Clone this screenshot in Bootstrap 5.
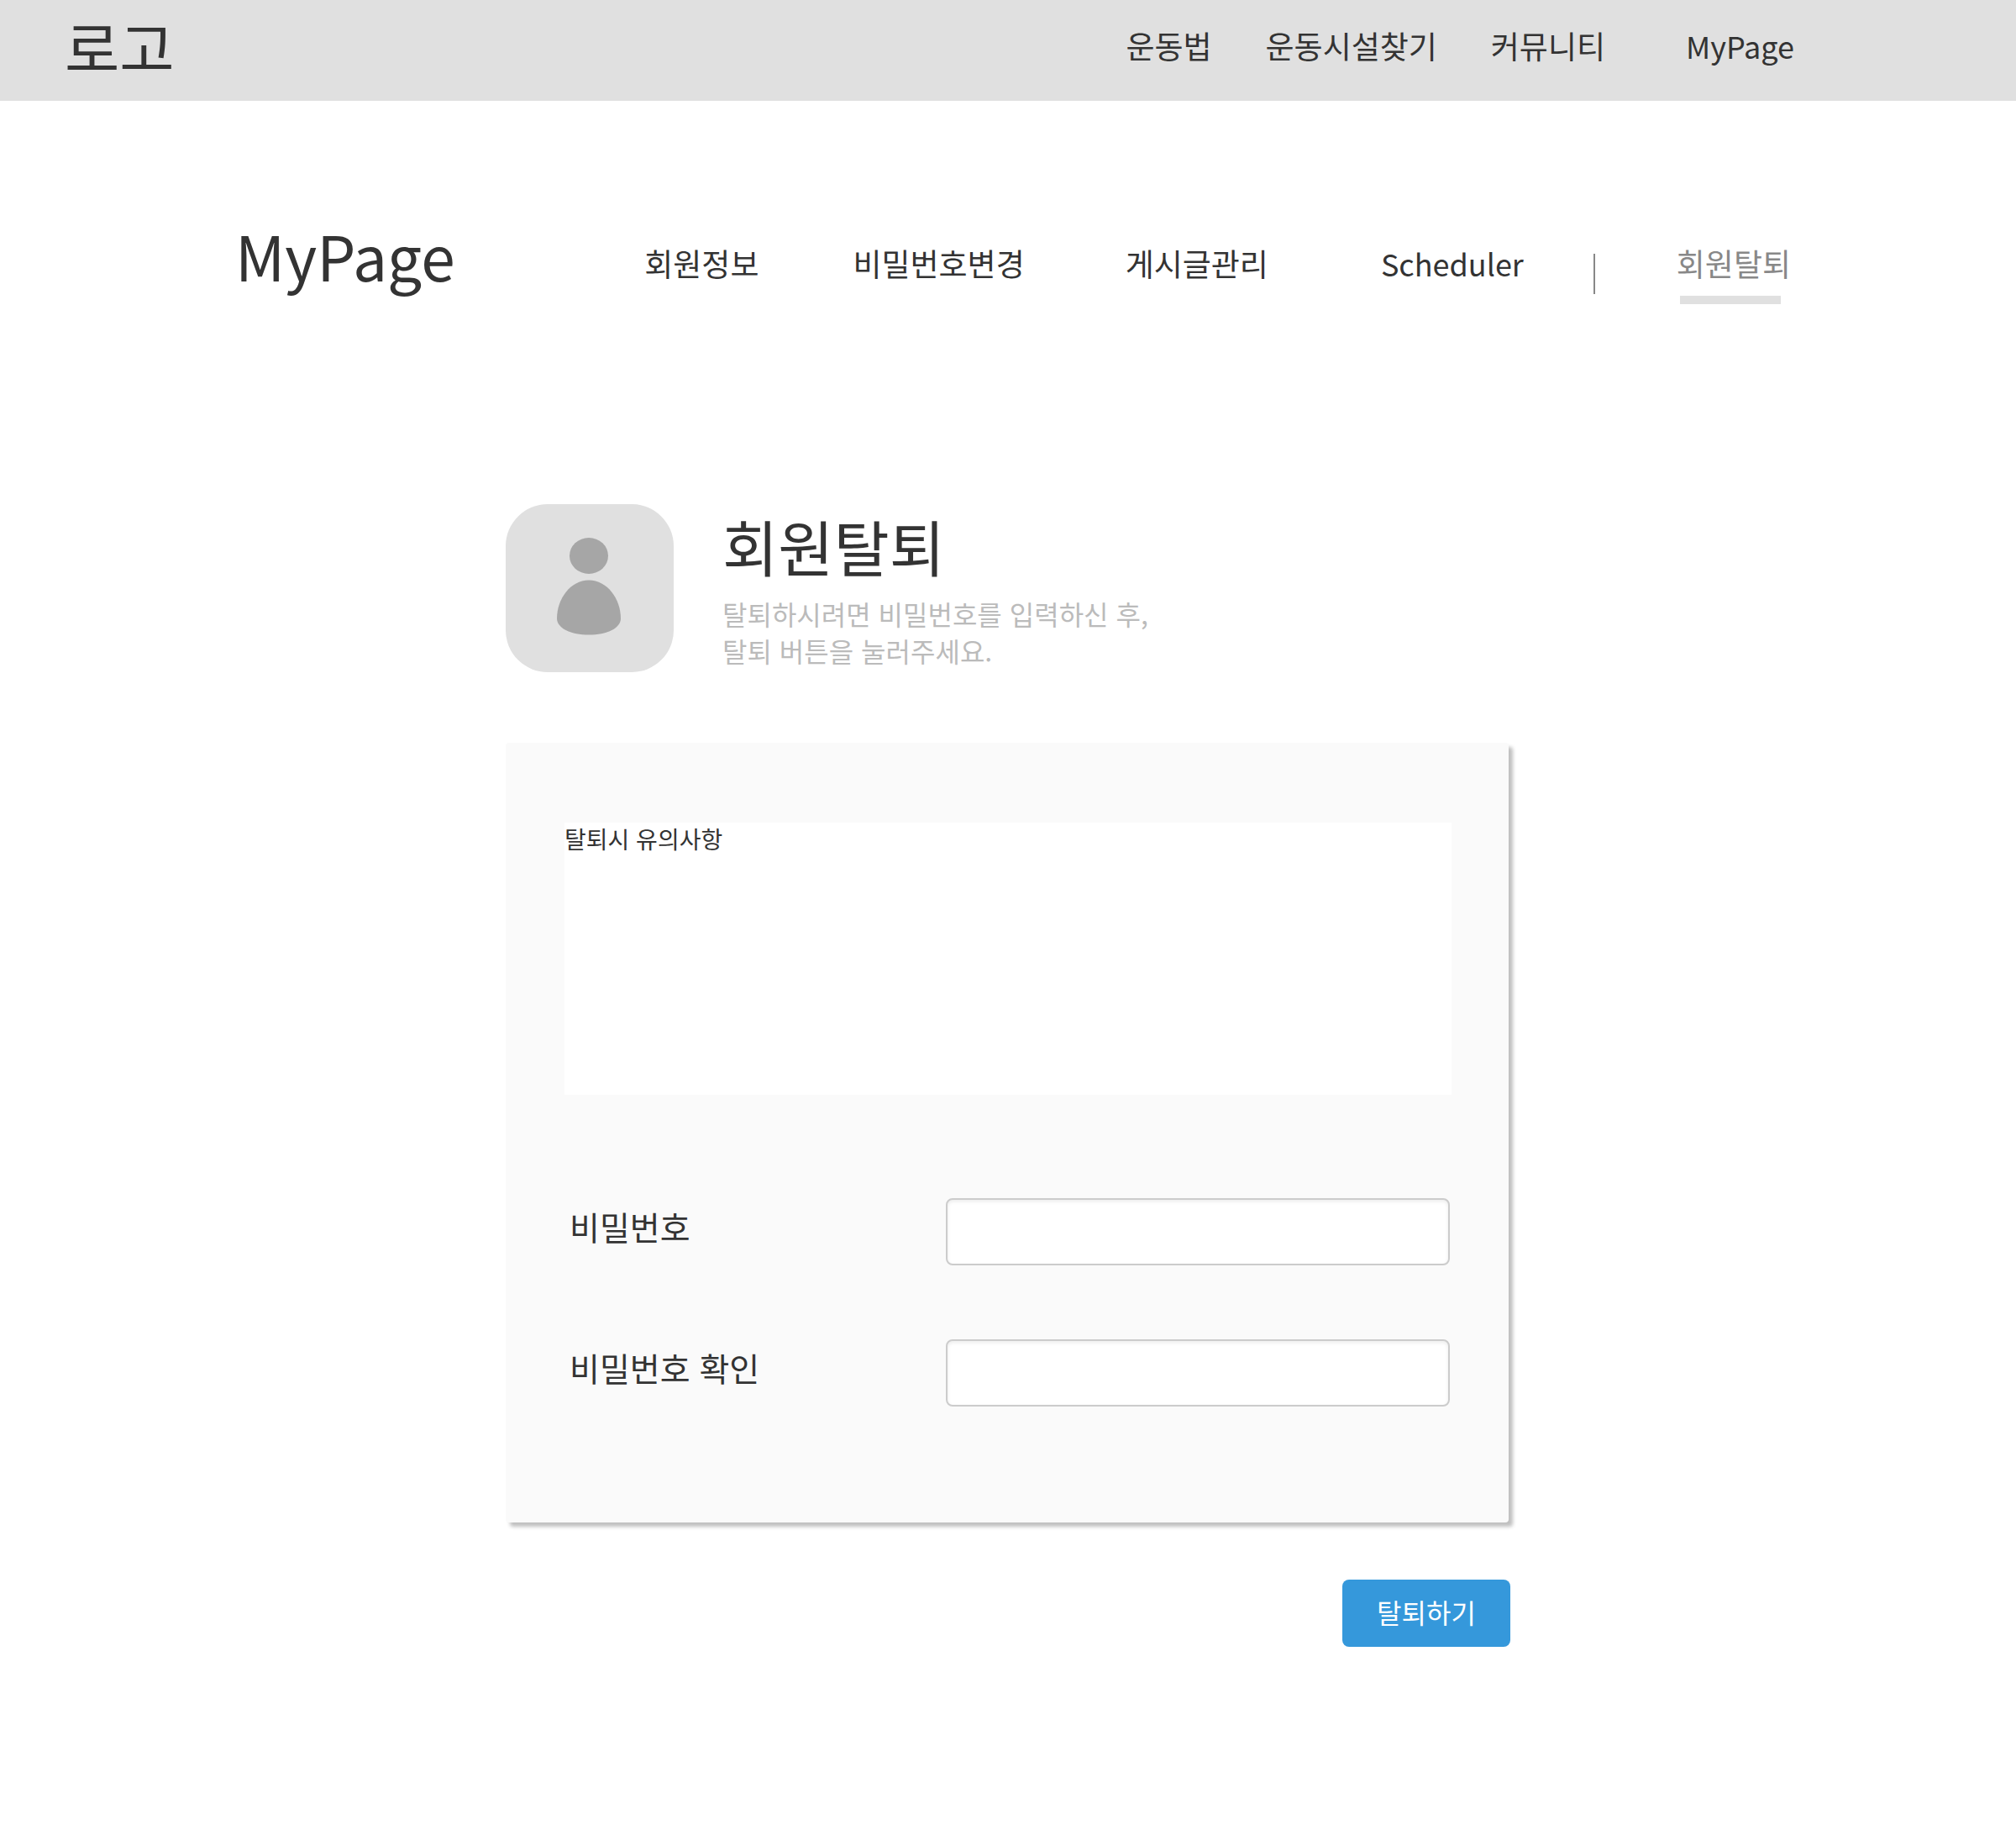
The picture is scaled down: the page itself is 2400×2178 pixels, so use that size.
<!DOCTYPE html>
<html lang="ko">
<head>
<meta charset="utf-8">
<meta name="viewport" content="width=device-width, initial-scale=1">
<title>MyPage - 회원탈퇴</title>
<link href="https://cdn.jsdelivr.net/npm/bootstrap@5.3.0/dist/css/bootstrap.min.css" rel="stylesheet">
<style>
body { font-family: "Noto Sans CJK KR", "Noto Sans", sans-serif; color: #333; background: #fff; }
a { color: #333; text-decoration: none; white-space: nowrap; }
a:hover { color: #888; }
.site-bar { min-height: 120px; padding: 1px 264px 0 77px; background: #e0e0e0; }
.site-logo { font-size: 71px; line-height: 106px; }
.site-menu { font-size: 37px; line-height: 54px; column-gap: 64px; padding-top: 26px; }
.menu-own { margin-left: 32px; }
.latin { font-size: 36px; }
.page-bar { padding: 130px 268px 0 280px; }
.page-title { font-size: 73px; line-height: 106px; }
.page-menu { font-size: 37px; line-height: 54px; padding-top: 36px; }
.gap-a { margin-left: 112px; }
.gap-b { margin-left: 120px; }
.gap-c { margin-left: 134px; }
.menu-rule { width: 2px; height: 48px; margin: 16px 97px 0 83px; background: #888; }
.page-menu .current { color: #888; position: relative; }
.page-menu .current::after { content: ""; position: absolute; left: 4px; top: 66px; width: 120px; height: 10px; background: #e0e0e0; }
.leave { max-width: 1196px; padding-top: 244px; }
.avatar { width: 200px; height: 200px; border-radius: 50px; background: #e0e0e0; }
.leave-intro { padding-left: 58px; }
.leave-title { font-size: 72px; line-height: 98px; }
.leave-text { margin: 10px 0 0; font-size: 32px; line-height: 44px; color: #bbb; }
.panel { margin: 84px 2px 0 0; padding: 95px 68px 138px 70px; background: #fafafa; border-radius: 4px; box-shadow: 5px 5px 4px rgba(0,0,0,.25); }
.notice { min-height: 324px; margin-bottom: 123px; background: #fff; font-size: 28px; line-height: 38px; }
.field { padding: 0 2px 0 6px; min-height: 80px; }
.field + .field { margin-top: 88px; }
.field label { font-size: 39px; line-height: 66px; }
.field input { width: 600px; height: 80px; font-size: 32px; border: 2px solid #ccc; border-radius: 8px; box-shadow: inset 0 2px 4px rgba(0,0,0,.08); }
.leave-btn { width: 200px; height: 80px; margin-top: 68px; padding: 0 0 4px; border: 0; border-radius: 8px; font-size: 32px; color: #fff; background: #3598db; }
</style>
</head>
<body>
<header class="site-bar d-flex flex-wrap justify-content-between align-items-start">
  <a class="site-logo" href="#">로고</a>
  <nav class="site-menu d-flex flex-wrap" aria-label="주 메뉴">
    <a href="#">운동법</a>
    <a href="#">운동시설찾기</a>
    <a href="#">커뮤니티</a>
    <a class="menu-own latin" href="#">MyPage</a>
  </nav>
</header>
<div class="page-bar d-flex flex-wrap justify-content-between align-items-start">
  <h1 class="page-title fw-normal m-0">MyPage</h1>
  <nav class="page-menu d-flex flex-wrap" aria-label="MyPage 메뉴">
    <a href="#">회원정보</a>
    <a class="gap-a" href="#">비밀번호변경</a>
    <a class="gap-b" href="#">게시글관리</a>
    <a class="gap-c latin" href="#">Scheduler</a>
    <span class="menu-rule"></span>
    <a class="current" href="#" aria-current="page">회원탈퇴</a>
  </nav>
</div>
<main class="leave mx-auto">
  <div class="d-flex">
    <div class="avatar flex-shrink-0">
      <svg width="200" height="200" viewBox="0 0 200 200" fill="#a6a6a6" aria-hidden="true">
        <ellipse cx="99" cy="61.500" rx="23" ry="21.500"/>
        <path d="M99 90.500C121 90.500 137 113 137 136C137 148 120 155.500 99 155.500S61 148 61 136C61 113 77 90.500 99 90.500Z"/>
      </svg>
    </div>
    <div class="leave-intro">
      <h2 class="leave-title fw-normal m-0">회원탈퇴</h2>
      <p class="leave-text">탈퇴하시려면 비밀번호를 입력하신 후,<br>탈퇴 버튼을 눌러주세요.</p>
    </div>
  </div>
  <form>
    <div class="panel">
      <div class="notice">탈퇴시 유의사항</div>
      <div class="field d-flex justify-content-between align-items-start">
        <label for="pw">비밀번호</label>
        <input class="form-control" type="password" id="pw">
      </div>
      <div class="field d-flex justify-content-between align-items-start">
        <label for="pw2">비밀번호 확인</label>
        <input class="form-control" type="password" id="pw2">
      </div>
    </div>
    <div class="d-flex justify-content-end">
      <button class="btn leave-btn" type="button">탈퇴하기</button>
    </div>
  </form>
</main>
<script src="https://cdn.jsdelivr.net/npm/bootstrap@5.3.0/dist/js/bootstrap.bundle.min.js"></script>
</body>
</html>
